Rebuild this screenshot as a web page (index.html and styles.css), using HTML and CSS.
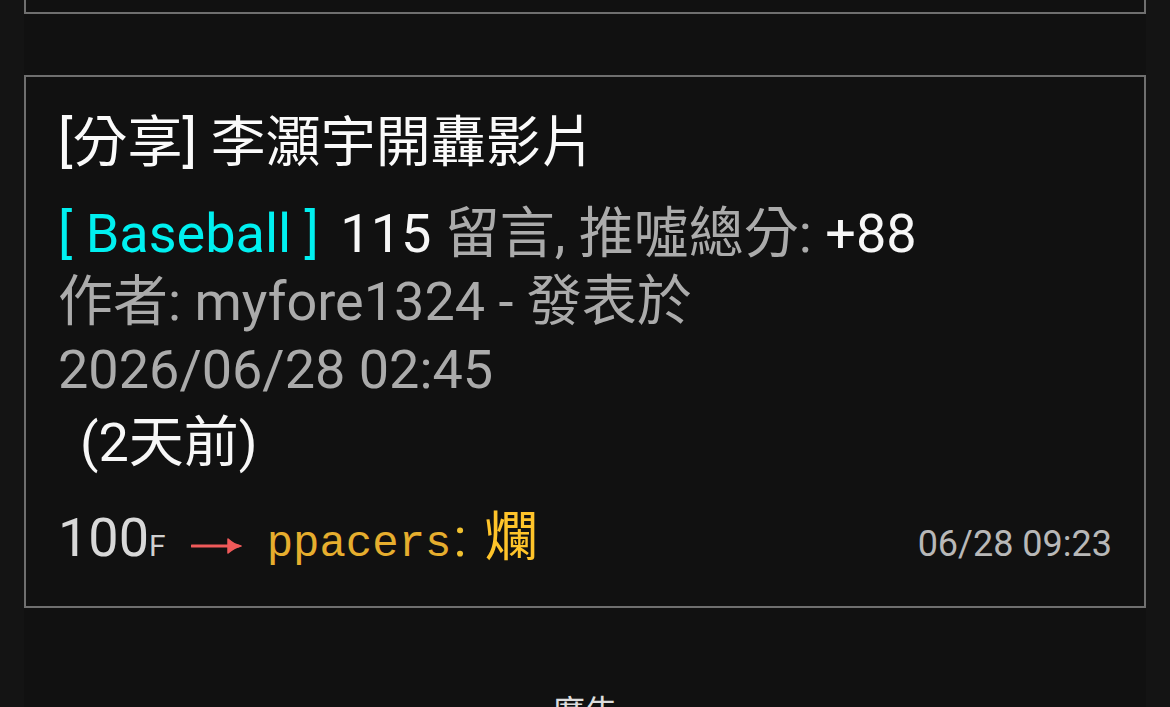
FILE: index.html
```html
<!DOCTYPE html>
<html lang="zh-Hant">
<head>
<meta charset="utf-8">
<title>文章列表</title>
<link rel="stylesheet" href="styles.css">
</head>
<body>
<main class="column">
  <div class="card card-prev"></div>
  <article class="card">
    <h2 class="title">[分享] 李灝宇開轟影片</h2>
    <div class="meta">
      <div class="meta-line"><span class="board">[ Baseball ]</span> <span class="white count">115</span> <span class="cjk">留言</span>, <span class="cjk">推噓總分</span>: <span class="white">+88</span></div>
      <div class="meta-line"><span class="cjk">作者</span>: myfore1324 - <span class="cjk">發表於</span> <span class="nowrap">2026/06/28 02:45</span></div>
      <div class="meta-line ago white">(2<span class="cjk">天前</span>)</div>
    </div>
    <div class="push">
      <div class="push-main">
        <span class="floor">100<span class="floor-f">F</span></span>
        <svg class="arrow" width="52" height="20" viewBox="0 0 52 20" aria-hidden="true">
          <path d="M1 10 H47" stroke="#f05a5a" stroke-width="3" fill="none" stroke-linecap="round"/>
          <path d="M37 3 Q43 8.5 50 10 Q43 11.5 37 17 Z" fill="#f05a5a" stroke="#f05a5a" stroke-width="1.5" stroke-linejoin="round"/>
        </svg>
        <span class="push-user">ppacers</span><span class="push-colon">:</span> <span class="push-text">爛</span>
      </div>
      <span class="push-time">06/28 09:23</span>
    </div>
  </article>
  <div class="ad">廣告</div>
</main>
</body>
</html>
```

FILE: styles.css
```css
html, body {
  margin: 0;
  padding: 0;
  background: #141414;
  height: 707px;
  overflow: hidden;
}

body {
  font-family: Roboto, "Noto Sans CJK TC", sans-serif;
  color: #ababab;
}

.column {
  margin: 0 24px;
  background: #111111;
  min-height: 707px;
}

.card {
  border: 2px solid #6f6f6f;
  padding: 30px 32px 26px 32px;
  background: #111111;
}

.card-prev {
  border-top: none;
  height: 12px;
  padding: 0;
  margin-bottom: 61px;
}

.title {
  margin: 0 0 23px 0;
  font-size: 55px;
  font-weight: 400;
  line-height: 70px;
  color: #fafafa;
}

.meta {
  font-size: 54px;
  line-height: 68px;
}

.meta-line {
  color: #ababab;
}

.cjk {
  font-size: 55px;
  line-height: 1;
}

.board {
  color: #00f0f0;
}

.white {
  color: #f7f7f7;
}

.count {
  margin-left: 8px;
}

.nowrap {
  white-space: nowrap;
}

.ago {
  margin-top: 5px;
  padding-left: 22px;
}

.push {
  display: flex;
  align-items: baseline;
  justify-content: space-between;
  margin-top: 27px;
  line-height: 68px;
}

.push-main {
  display: flex;
  align-items: baseline;
  font-size: 54px;
}

.floor {
  color: #d8d8d8;
}

.floor-f {
  font-size: 30px;
  color: #d0d0d0;
}

.arrow {
  align-self: center;
  margin: 0 24px 0 25px;
  position: relative;
  top: 4px;
}

.push-user {
  font-family: "Courier New", "Nimbus Mono PS", "FreeMono", "Liberation Mono", monospace;
  font-size: 44px;
  color: #e6ae2e;
}

.push-colon {
  color: #f0c030;
  margin-left: 2px;
}

.push-text {
  color: #ffc42a;
  margin-left: 18px;
}

.push-time {
  font-size: 36px;
  color: #b8b8b8;
}

.ad {
  margin-top: 85px;
  text-align: center;
  font-size: 33px;
  line-height: 40px;
  color: #dddddd;
}
```
